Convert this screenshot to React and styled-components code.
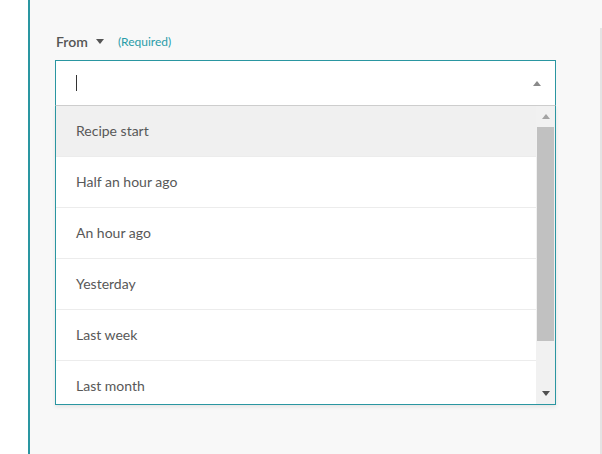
import React from 'react';
import styled, { createGlobalStyle } from 'styled-components';

const GlobalStyle = createGlobalStyle`
  html, body {
    margin: 0;
    padding: 0;
    background: #ffffff;
    font-family: Lato, "Open Sans", sans-serif;
  }
`;

const Page = styled.div`
  display: flex;
  width: 602px;
  height: 454px;
  overflow: hidden;
`;

const Gutter = styled.div`
  width: 28px;
  background: #ffffff;
`;

const Main = styled.div`
  flex: 1;
  background: #f8f8f8;
  border-left: 2px solid #2a96a1;
  padding: 31px 0 0 25px;
  position: relative;
`;

const Edge = styled.div`
  position: absolute;
  right: 0;
  top: 28px;
  bottom: 0;
  width: 2px;
  background: #e4e4e4;
`;

const LabelRow = styled.div`
  display: flex;
  align-items: center;
  height: 20px;
  margin-bottom: 9px;
  padding-left: 1px;
`;

const Label = styled.span`
  font-size: 14px;
  font-weight: 600;
  color: #555555;
`;

const Caret = styled.span`
  display: inline-block;
  width: 0;
  height: 0;
  margin: 0 14px 0 8px;
  border-left: 4px solid transparent;
  border-right: 4px solid transparent;
  border-top: 5px solid #555555;
`;

const Required = styled.span`
  font-size: 12px;
  color: #2a9ca8;
`;

const Field = styled.div`
  width: 501px;
`;

const Input = styled.div`
  display: flex;
  align-items: center;
  box-sizing: border-box;
  height: 46px;
  background: #ffffff;
  border: 1px solid #2a96a1;
  border-bottom: 1px solid #cfcfcf;
  padding: 0 14px 0 20px;
`;

const Cursor = styled.span`
  width: 1px;
  height: 16px;
  background: #333333;
`;

const Spacer = styled.div`
  flex: 1;
`;

const Arrow = styled.span`
  width: 0;
  height: 0;
  border-left: 4px solid transparent;
  border-right: 4px solid transparent;
  border-${p => (p.down ? 'top' : 'bottom')}: 5px solid ${p => p.color || '#888888'};
`;

const List = styled.div`
  display: flex;
  height: 299px;
  box-sizing: border-box;
  background: #ffffff;
  border: 1px solid #2a96a1;
  border-top: none;
  box-shadow: 0 2px 4px rgba(0, 0, 0, 0.08);
`;

const Options = styled.div`
  flex: 1;
  overflow: hidden;
`;

const Option = styled.div`
  height: 51px;
  box-sizing: border-box;
  display: flex;
  align-items: center;
  padding: 0 0 2px 20px;
  font-size: 14px;
  color: #585858;
  background: ${p => (p.active ? '#f0f0f0' : '#ffffff')};
  border-bottom: 1px solid #ececec;
`;

const Scrollbar = styled.div`
  width: 19px;
  background: #f1f1f1;
  display: flex;
  flex-direction: column;
  align-items: center;
`;

const ScrollButton = styled.div`
  height: 21px;
  display: flex;
  align-items: center;
  justify-content: center;
`;

const Thumb = styled.div`
  width: 17px;
  height: 214px;
  background: #c1c1c1;
`;

const options = ['Recipe start', 'Half an hour ago', 'An hour ago', 'Yesterday', 'Last week', 'Last month'];

const App = () => {
  return (<Page>
    <GlobalStyle />
    <Gutter />
    <Main>
      <Edge />
      <Field>
        <LabelRow>
          <Label>{'From'}</Label>
          <Caret />
          <Required>{'(Required)'}</Required>
        </LabelRow>
        <Input>
          <Cursor />
          <Spacer />
          <Arrow color="#8a8a8a" />
        </Input>
        <List>
          <Options>
            {options.map((o, i) => <Option key={o} active={i === 0}>{o}</Option>)}
          </Options>
          <Scrollbar>
            <ScrollButton><Arrow color="#a3a3a3" /></ScrollButton>
            <Thumb />
            <Spacer />
            <ScrollButton><Arrow down color="#505050" /></ScrollButton>
          </Scrollbar>
        </List>
      </Field>
    </Main>
  </Page>);
};

export default App;
